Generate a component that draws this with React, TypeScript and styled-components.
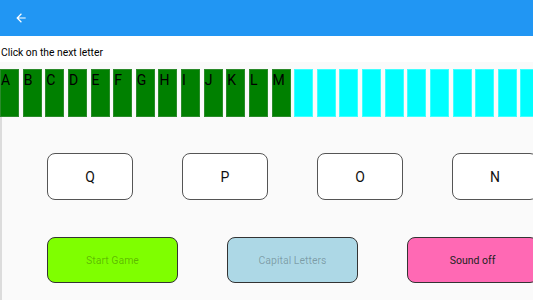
import React from 'react';
import styled, { createGlobalStyle } from 'styled-components';

const ALPHABET = 'ABCDEFGHIJKLMNOPQRSTUVWXYZ'.split('');
const DONE = 13;
const CHOICES = ['Q', 'P', 'O', 'N'];

const GlobalStyle = createGlobalStyle`
  html, body {
    margin: 0;
    padding: 0;
    background: #fafafa;
    font-family: Roboto, "Liberation Sans", sans-serif;
    overflow: hidden;
  }
`;

export default function App() {
  return (
    <Page>
      <GlobalStyle />
      <Header>
        <svg width="14" height="14" viewBox="0 0 24 24">
          <path fill="#fff" d="M20 11H7.83l5.59-5.59L12 4l-8 8 8 8 1.41-1.41L7.83 13H20v-2z" />
        </svg>
      </Header>
      <Prompt>Click on the next letter</Prompt>
      <Strip>
        {ALPHABET.map((letter, i) => (
          <Tile key={letter} done={i < DONE}>
            {i < DONE ? letter : ''}
          </Tile>
        ))}
      </Strip>
      <Board>
        <ChoiceRow>
          {CHOICES.map((c) => (
            <Choice key={c}>{c}</Choice>
          ))}
        </ChoiceRow>
        <ActionRow>
          <Action bg="#7fff00" fg="rgba(0,0,0,0.28)">Start Game</Action>
          <Action bg="#add8e6" fg="rgba(0,0,0,0.28)">Capital Letters</Action>
          <Action bg="#ff69b4" fg="#222">Sound off</Action>
        </ActionRow>
      </Board>
    </Page>
  );
}

const Page = styled.div`
  width: 533px;
  height: 300px;
  display: flex;
  flex-direction: column;
  overflow: hidden;
`;

const Header = styled.div`
  height: 36px;
  flex: 0 0 36px;
  background: #2196f3;
  display: flex;
  align-items: center;
  padding-left: 14px;
`;

const Prompt = styled.div`
  height: 26px;
  box-sizing: border-box;
  background: #fff;
  font-size: 10.3px;
  color: #000;
  display: flex;
  align-items: center;
  padding: 6px 0 0 1px;
`;

const Strip = styled.div`
  margin-top: 7px;
  height: 48px;
  display: flex;
  gap: 3.64px;
  overflow: hidden;
`;

const Tile = styled.div<{ done: boolean }>`
  flex: 0 0 19px;
  box-sizing: border-box;
  background: ${(p) => (p.done ? '#008000' : '#00ffff')};
  border: 1px solid ${(p) => (p.done ? '#2a8a2a' : '#40ffff')};
  font-size: 14px;
  line-height: 16px;
  padding-top: 2px;
  color: #000;
`;

const Board = styled.div`
  flex: 1;
  border-left: 2px solid #dcdcdc;
`;

const ChoiceRow = styled.div`
  display: flex;
  gap: 49px;
  padding: 36px 0 0 45px;
  white-space: nowrap;
`;

const Choice = styled.div`
  flex: 0 0 86px;
  height: 47px;
  box-sizing: border-box;
  background: #fff;
  border: 1.5px solid #555;
  border-radius: 8px;
  display: flex;
  align-items: center;
  justify-content: center;
  font-size: 14px;
  color: #111;
`;

const ActionRow = styled.div`
  display: flex;
  gap: 49px;
  padding: 37px 0 0 45px;
  white-space: nowrap;
`;

const Action = styled.div<{ bg: string; fg: string }>`
  flex: 0 0 131px;
  height: 46px;
  box-sizing: border-box;
  background: ${(p) => p.bg};
  color: ${(p) => p.fg};
  border: 1.5px solid #333;
  border-radius: 8px;
  display: flex;
  align-items: center;
  justify-content: center;
  font-size: 10.5px;
`;
